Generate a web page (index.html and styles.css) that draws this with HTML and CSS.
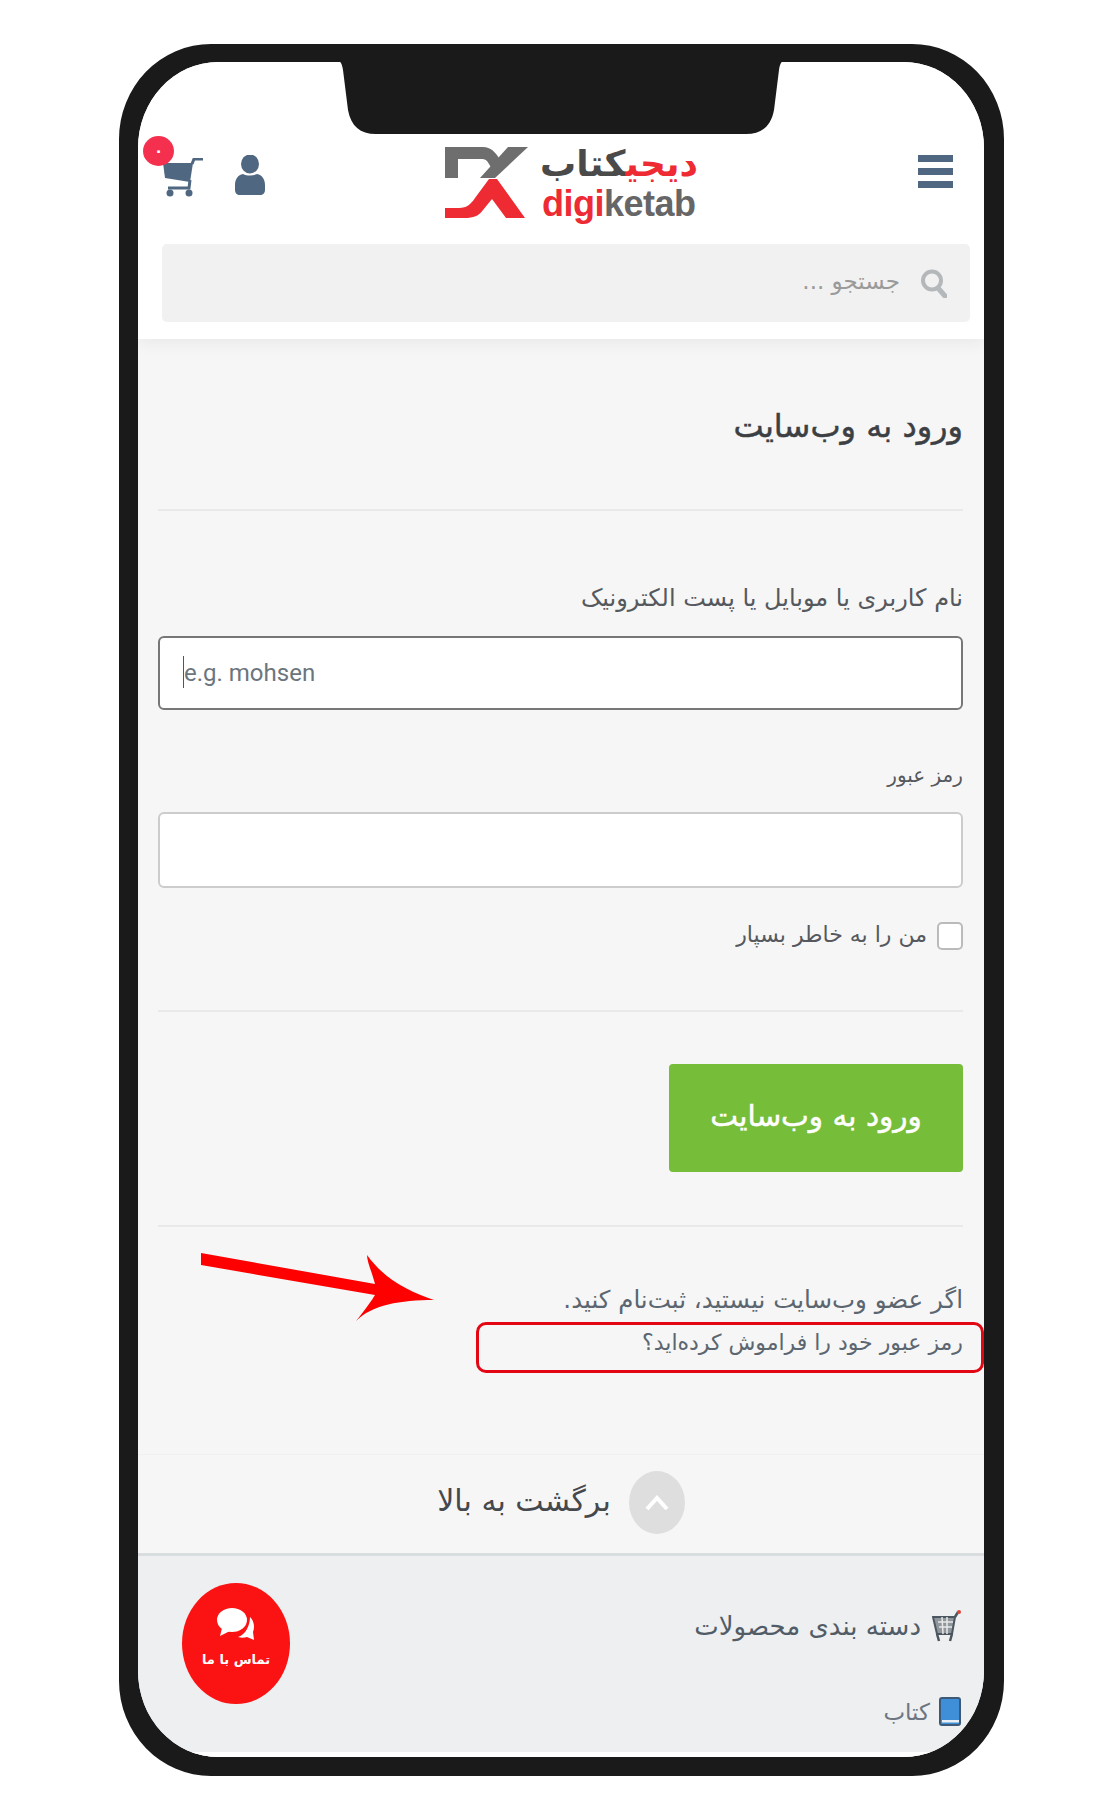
FILE: index.html
```html
<!DOCTYPE html>
<html lang="fa">
<head>
  <meta charset="utf-8">
  <title>ورود به وب‌سایت</title>
  <link rel="stylesheet" href="styles.css">
</head>
<body>
  <div class="phone">
    <svg class="notch" width="450" height="76" viewBox="0 0 450 76">
      <path d="M0 0C4 0 6 3 7 10L12 50C15 66 24 74 40 74H410C426 74 435 66 438 50L443 10C444 3 446 0 450 0Z" fill="#1a1a1a"/>
    </svg>

    <div class="screen" dir="rtl">
      <header class="site-head">
        <div class="top-row">
          <a class="cart">
            <span class="badge">۰</span>
            <svg width="40" height="40" viewBox="0 0 40 40">
              <path d="M0 5H30L27 24L2 20Z" fill="#4f6781"/>
              <path d="M29 6L31 1H40M27 22L26 30H5" fill="none" stroke="#4f6781" stroke-width="3"/>
              <circle cx="7" cy="35" r="3.5" fill="#4f6781"/>
              <circle cx="26" cy="35" r="3.5" fill="#4f6781"/>
            </svg>
          </a>
          <a class="user">
            <svg width="30" height="40" viewBox="0 0 30 40">
              <ellipse cx="15" cy="9" rx="9" ry="9.5" fill="#4f6781"/>
              <path d="M8 19C3 20 0 24 0 30V35C0 38 2 40 5 40H25C28 40 30 38 30 35V30C30 24 27 20 22 19C18 21 12 21 8 19Z" fill="#4f6781"/>
            </svg>
          </a>
          <a class="logo">
            <svg width="84" height="74" viewBox="0 0 84 74">
              <path d="M0 1H38C46 1 50 6 54 12L58 19L50 28L44 18C42 14 40 13 36 13H13V32H0Z" fill="#6e6e6e"/>
              <path d="M83 1H63L35 32H50Z" fill="#6e6e6e"/>
              <path d="M0 62H14C22 62 26 58 30 52L44 33H52L80 72H61L47 53L38 64C34 70 28 72 20 72H0Z" fill="#ee2a33"/>
            </svg>
            <div class="logo-text">
              <div class="logo-fa"><span class="logo-red">دیجی</span>کتاب</div>
              <div class="logo-en"><span class="logo-red">digi</span>ketab</div>
            </div>
          </a>
          <a class="burger"><span></span><span></span><span></span></a>
        </div>
        <div class="search">
          <svg width="27" height="30" viewBox="0 0 27 30">
            <circle cx="12" cy="12.500" r="9" fill="none" stroke="#b4b8bb" stroke-width="4"/>
            <path d="M18 20L25 28" stroke="#b4b8bb" stroke-width="5" stroke-linecap="round"/>
          </svg>
          <span class="search-text">جستجو ...</span>
        </div>
      </header>

      <main class="login">
        <h1>ورود به وب‌سایت</h1>
        <hr class="line-title">

        <label class="field-label first">نام کاربری یا موبایل یا پست الکترونیک</label>
        <div class="input-wrap">
          <input class="text-input focused" type="text" dir="ltr" placeholder="e.g. mohsen">
          <span class="caret"></span>
        </div>

        <label class="field-label second">رمز عبور</label>
        <input class="text-input pass" type="password">

        <label class="remember">
          <input type="checkbox">
          <span class="remember-text">من را به خاطر بسپار</span>
        </label>
        <hr class="line-remember">

        <button class="submit" type="button">ورود به وب‌سایت</button>
        <hr class="line-submit">

        <div class="links">
          <svg class="arrow" width="236" height="74" viewBox="0 0 236 74">
            <path d="M1 3L175 34C172 22 167 12 167 5C185 30 210 42 234 50C200 50 172 55 156 71C165 60 172 50 175 45L1 15Z" fill="#fe0000"/>
          </svg>
          <p class="signup">اگر عضو وب‌سایت نیستید، ثبت‌نام کنید.</p>
          <p class="forgot">رمز عبور خود را فراموش کرده‌اید؟<span class="mark"></span></p>
        </div>
      </main>

      <div class="to-top">
        <span class="up-circle">
          <svg width="26" height="16" viewBox="0 0 26 16">
            <path d="M3 14L13 3L23 14" fill="none" stroke="#fff" stroke-width="4"/>
          </svg>
        </span>
        <span class="to-top-text">برگشت به بالا</span>
      </div>

      <footer class="site-foot">
        <div class="cat-title">
          <svg width="29" height="32" viewBox="0 0 29 32">
            <path d="M1 7H23L20 24H5Z" fill="#8f969c" stroke="#4c5661" stroke-width="2"/>
            <path d="M6 12H21M7 17H20M10 7L11 24M15 7V24" stroke="#e8e8e8" stroke-width="1.500"/>
            <path d="M23 7L26 2" stroke="#4c5661" stroke-width="2.500"/>
            <circle cx="27" cy="2" r="2" fill="#d9483b"/>
            <path d="M5 24L7 31M20 24L18 31" stroke="#4c5661" stroke-width="2.500"/>
          </svg>
          <span>دسته بندی محصولات</span>
        </div>
        <div class="cat-item">
          <svg width="22" height="29" viewBox="0 0 22 29">
            <rect x="1" y="1" width="20" height="27" rx="2" fill="#3f8fd8" stroke="#3c5a78" stroke-width="2"/>
            <rect x="3" y="23" width="17" height="2.500" fill="#e8eef4"/>
          </svg>
          <span>کتاب</span>
        </div>
        <a class="contact">
          <svg width="38" height="33" viewBox="0 0 38 33">
            <path d="M33 9C37 13 38 19 36 24L37 32L30 29C27 30 24 30 21 29C28 27 33 18 33 9Z" fill="#fff"/>
            <ellipse cx="15" cy="12" rx="15" ry="12" fill="#fff"/>
            <path d="M5 20L3 28L13 23Z" fill="#fff"/>
          </svg>
          <span>تماس با ما</span>
        </a>
      </footer>
    </div>
  </div>
</body>
</html>
```

FILE: styles.css
```css
* {
  box-sizing: border-box;
}
html, body {
  margin: 0;
  padding: 0;
}
body {
  background: #fff;
  font-family: "DejaVu Sans", "Noto Sans", sans-serif;
  color: #4a4f55;
}
.phone {
  position: relative;
  width: 885px;
  height: 1732px;
  margin: 44px 0 0 119px;
  border: solid #1a1a1a;
  border-width: 18px 20px 19px 19px;
  border-radius: 92px / 95px;
  background: #1a1a1a;
}
.notch {
  position: absolute;
  top: -2px;
  left: 198px;
  z-index: 3;
}
.screen {
  position: relative;
  height: 1695px;
  border-radius: 80px / 86px;
  overflow: hidden;
  background: #f6f6f6;
}

/* header */
.site-head {
  position: relative;
  height: 277px;
  padding-top: 78px;
  background: #fff;
  box-shadow: 0 4px 16px rgba(0, 0, 0, 0.06);
}
.top-row {
  direction: ltr;
  display: flex;
  align-items: flex-start;
  height: 104px;
  padding: 0 31px 0 25px;
}
.cart {
  position: relative;
  width: 40px;
  margin-top: 18px;
}
.badge {
  position: absolute;
  top: -22px;
  left: -20px;
  width: 31px;
  height: 30px;
  border-radius: 50%;
  background: #f5304f;
  color: #fff;
  font-size: 15px;
  font-weight: bold;
  line-height: 30px;
  text-align: center;
}
.user {
  margin: 15px 0 0 32px;
}
.logo {
  display: flex;
  gap: 13px;
  margin: 6px 0 0 180px;
}
.logo-text {
  width: 156px;
}
.logo-fa {
  font-size: 36px;
  font-weight: bold;
  line-height: 36px;
  color: #4a4a4a;
  direction: rtl;
  white-space: nowrap;
}
.logo-en {
  margin-top: 3px;
  font-family: "Liberation Sans", sans-serif;
  font-size: 36px;
  font-weight: bold;
  line-height: 38px;
  letter-spacing: -0.5px;
  color: #666;
}
.logo-red {
  color: #ee2a33;
}
.burger {
  margin: 15px 0 0 auto;
  width: 35px;
  display: flex;
  flex-direction: column;
  gap: 6px;
}
.burger span {
  height: 7px;
  background: #4f6781;
}
.search {
  display: flex;
  align-items: center;
  gap: 20px;
  height: 78px;
  margin: 0 14px 0 24px;
  padding-right: 23px;
  border-radius: 5px;
  background: #f1f1f1;
  color: #9a9a9a;
  font-size: 23px;
}
.search-text {
  margin-bottom: 4px;
}

/* login form */
.login {
  height: 1115px;
  padding: 67px 21px 0 20px;
}
h1 {
  margin: 0;
  font-size: 32px;
  font-weight: normal;
  line-height: 40px;
  color: #3c3f43;
  -webkit-text-stroke: 0.5px #3c3f43;
}
hr {
  height: 2px;
  margin: 0;
  border: 0;
  background: #e9e9e9;
}
.line-title {
  margin-top: 63px;
}
.field-label {
  display: block;
  font-size: 24px;
  line-height: 30px;
  color: #55595e;
}
.field-label.first {
  margin-top: 72px;
}
.field-label.second {
  margin-top: 50px;
  font-size: 20px;
}
.input-wrap {
  position: relative;
  margin-top: 23px;
}
.text-input {
  display: block;
  width: 100%;
  height: 74px;
  padding: 0 24px;
  border: 2px solid #777;
  border-radius: 6px;
  background: #fff;
  font-family: Roboto, sans-serif;
  font-size: 24px;
}
.text-input::placeholder {
  color: #6c757d;
}
.caret {
  position: absolute;
  top: 20px;
  left: 25px;
  width: 1px;
  height: 32px;
  background: #555;
}
.text-input.pass {
  height: 76px;
  margin-top: 22px;
  border-color: #ccc;
}
.remember {
  display: flex;
  align-items: center;
  gap: 10px;
  height: 28px;
  margin-top: 34px;
  font-size: 22px;
  color: #55595e;
}
.remember-text {
  margin-bottom: 4px;
}
.remember input {
  appearance: none;
  width: 26px;
  height: 28px;
  margin: 0;
  border: 2px solid #bbb;
  border-radius: 5px;
  background: #fff;
}
.line-remember {
  margin-top: 60px;
}
.submit {
  display: block;
  width: 294px;
  height: 108px;
  margin-top: 52px;
  padding-bottom: 6px;
  border: 0;
  border-radius: 4px;
  background: #76bd3a;
  color: #fff;
  font-family: inherit;
  font-size: 29.500px;
  -webkit-text-stroke: 0.5px #fff;
}
.line-submit {
  margin-top: 53px;
}
.links {
  position: relative;
  margin-top: 51px;
  line-height: 43px;
  color: #5b6670;
}
.links p {
  margin: 0;
}
.signup {
  font-size: 24.500px;
}
.forgot {
  position: relative;
  font-size: 22px;
}
.mark {
  position: absolute;
  top: 1px;
  right: -21px;
  width: 508px;
  height: 51px;
  border: 3px solid #e30613;
  border-radius: 10px;
}
.arrow {
  position: absolute;
  top: -28px;
  left: 42px;
}

/* back to top */
.to-top {
  display: flex;
  align-items: center;
  justify-content: center;
  gap: 18px;
  height: 102px;
  padding-bottom: 3px;
  border-top: 1px solid #f0f0f0;
  border-bottom: 3px solid #d8dedf;
  font-size: 30px;
  color: #45484c;
}
.to-top-text {
  margin-bottom: 5px;
}
.up-circle {
  display: flex;
  align-items: center;
  justify-content: center;
  width: 56px;
  height: 63px;
  border-radius: 50%;
  background: #dedede;
}

/* footer */
.site-foot {
  position: relative;
  height: 201px;
  padding: 54px 23px 0 0;
  background: #edeff1;
  border-bottom: 5px solid #fff;
}
.cat-title {
  display: flex;
  align-items: center;
  gap: 11px;
  font-size: 26px;
  color: #525c66;
}
.cat-item {
  display: flex;
  align-items: center;
  gap: 9px;
  margin-top: 55px;
  font-size: 23px;
  color: #6d7680;
}
.contact {
  position: absolute;
  top: 27px;
  left: 44px;
  width: 108px;
  height: 121px;
  border-radius: 50%;
  background: #fb1313;
  color: #fff;
  display: flex;
  flex-direction: column;
  align-items: center;
  padding-top: 25px;
  gap: 11px;
  font-size: 13px;
  font-weight: bold;
}
```
